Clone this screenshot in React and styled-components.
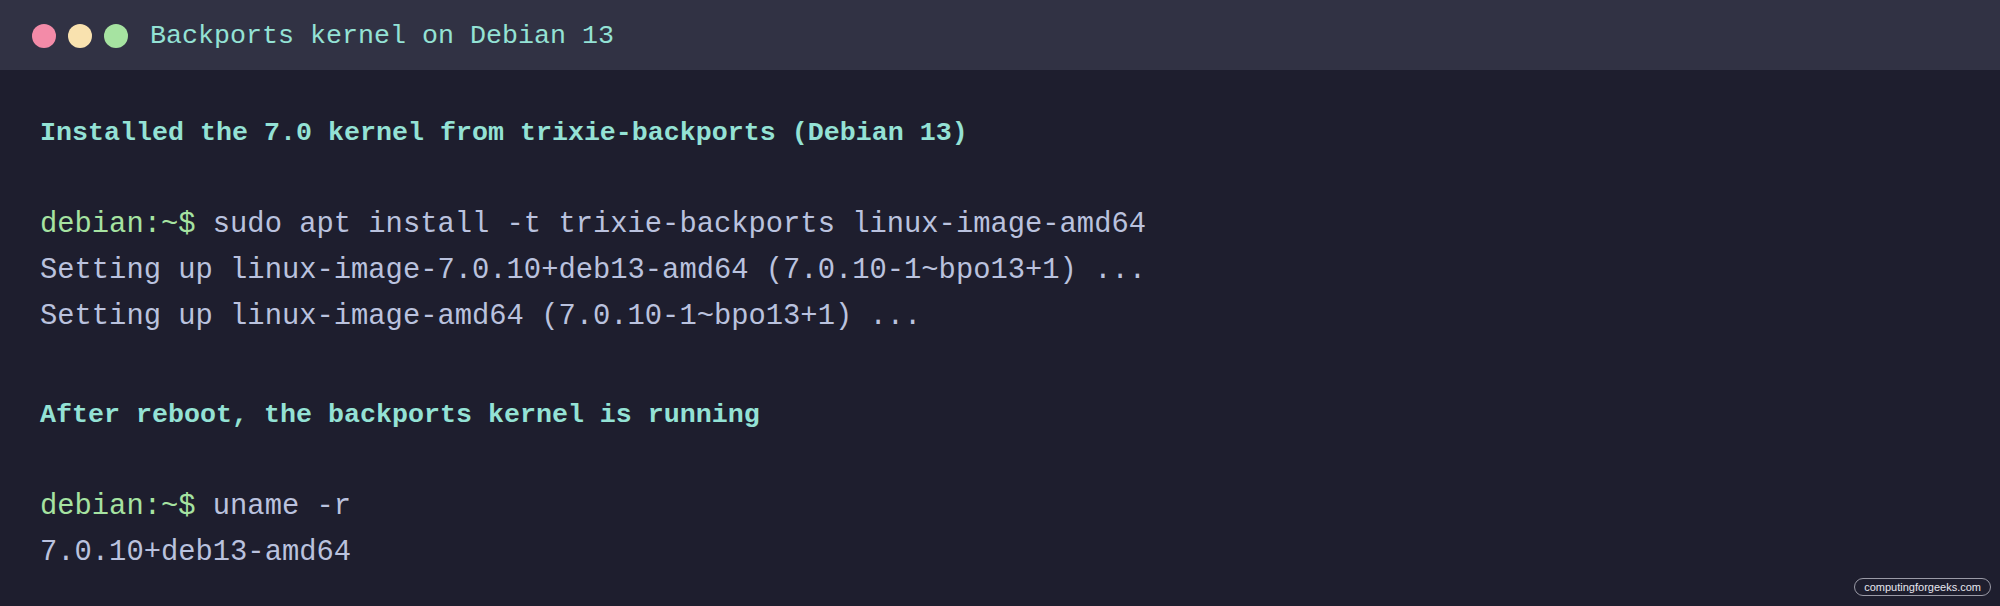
import React from "react";
import styled, { createGlobalStyle } from "styled-components";

// Estilos globales
const GlobalStyle = createGlobalStyle`
  html, body {
    margin: 0;
    padding: 0;
    background: #1e1e2e;
  }
  #root {
    min-height: 100vh;
  }
`;

const Window = styled.div`
  position: relative;
  width: 2000px;
  height: 606px;
  background: #1e1e2e;
  font-family: "Liberation Mono", "DejaVu Sans Mono", monospace;
  overflow: hidden;
`;

const TitleBar = styled.div`
  display: flex;
  align-items: center;
  height: 70px;
  padding: 2px 0 0 32px;
  box-sizing: border-box;
  background: #313244;
`;

const Dots = styled.div`
  display: flex;
  gap: 12px;
  margin-right: 22px;
`;

const Dot = styled.span`
  width: 24px;
  height: 24px;
  border-radius: 50%;
  background: ${(p) => p.$color};
`;

const Title = styled.span`
  color: #94e2d5;
  font-size: 26.67px;
`;

const Body = styled.div`
  padding: 40px 40px 0 40px;
  font-size: 28.8px;
  line-height: 46px;
  color: #bac2de;
`;

const Line = styled.div`
  white-space: pre;
`;

const Heading = styled(Line)`
  color: #94e2d5;
  font-weight: bold;
  font-size: 26.67px;
`;

const Blank = styled.div`
  height: ${(p) => p.$h || 46}px;
`;

const Prompt = styled.span`
  color: #a6e3a1;
`;

const Watermark = styled.div`
  position: absolute;
  right: 9px;
  bottom: 10px;
  height: 18px;
  padding: 0 9px;
  box-sizing: border-box;
  border: 1px solid #9a9aa6;
  border-radius: 9px;
  background: #1e1e2e;
  color: #e6e6ee;
  font-family: "Liberation Sans", Arial, sans-serif;
  font-size: 11px;
  line-height: 16px;
`;

export default function App() {
  return (
    <>
      <GlobalStyle />
      <Window>
        <TitleBar>
          <Dots>
            <Dot $color="#f38ba8" />
            <Dot $color="#f9e2af" />
            <Dot $color="#a6e3a1" />
          </Dots>
          <Title>Backports kernel on Debian 13</Title>
        </TitleBar>
        <Body>
          <Heading>Installed the 7.0 kernel from trixie-backports (Debian 13)</Heading>
          <Blank />
          <Line>
            <Prompt>debian:~$</Prompt> sudo apt install -t trixie-backports linux-image-amd64
          </Line>
          <Line>Setting up linux-image-7.0.10+deb13-amd64 (7.0.10-1~bpo13+1) ...</Line>
          <Line>Setting up linux-image-amd64 (7.0.10-1~bpo13+1) ...</Line>
          <Blank $h={52} />
          <Heading>After reboot, the backports kernel is running</Heading>
          <Blank />
          <Line>
            <Prompt>debian:~$</Prompt> uname -r
          </Line>
          <Line>7.0.10+deb13-amd64</Line>
        </Body>
        <Watermark>computingforgeeks.com</Watermark>
      </Window>
    </>
  );
}
